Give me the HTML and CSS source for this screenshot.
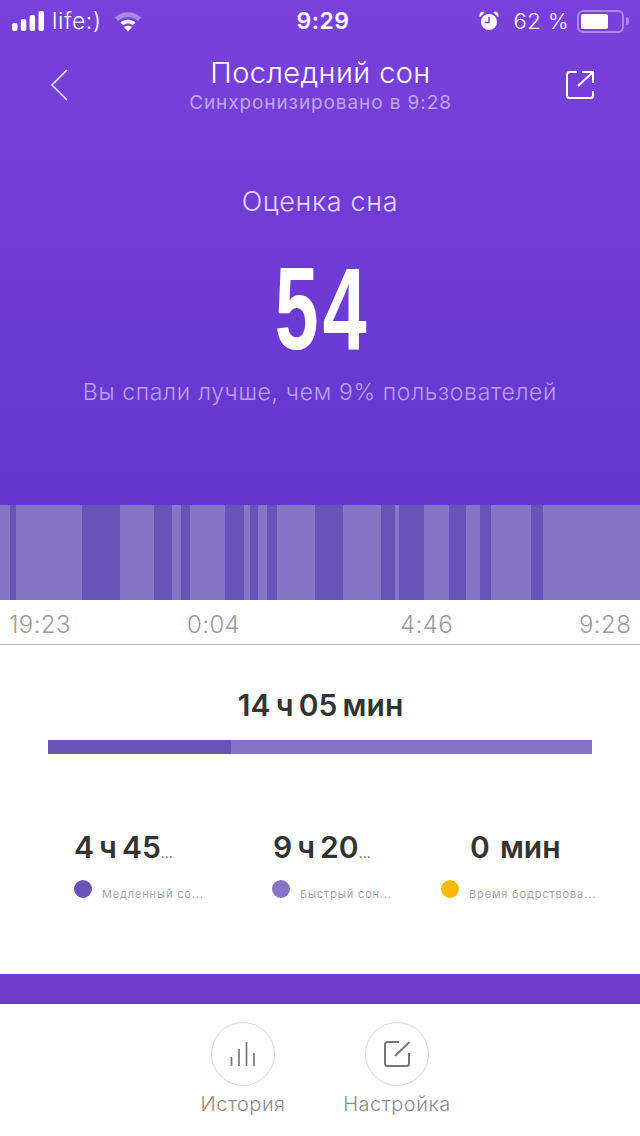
FILE: index.html
```html
<!DOCTYPE html>
<html lang="ru">
<head>
    <meta charset="UTF-8">
    <meta name="viewport" content="width=device-width, initial-scale=1.0">
    <title>Последний сон</title>
    <link rel="stylesheet" href="styles.css">
</head>
<body>
    <div class="page">
        <div class="hero">
            <div class="status-bar">
                <div class="status-left">
                    <svg class="signal" width="32" height="20" viewBox="0 0 32 20">
                        <rect x="0" y="12" width="5.500" height="8" rx="2" fill="#fff"/>
                        <rect x="8.800" y="8" width="5.500" height="12" rx="2" fill="#fff"/>
                        <rect x="17.600" y="4" width="5.500" height="16" rx="2" fill="#fff"/>
                        <rect x="26.500" y="0" width="5.500" height="20" rx="2" fill="#fff"/>
                    </svg>
                    <span class="carrier">life:)</span>
                    <svg class="wifi" width="28" height="21" viewBox="0 0 28 21">
                        <path d="M1 6.500C8.500 -0.500 19.500 -0.500 27 6.500L24 10C18 4.500 10 4.500 4 10Z" fill="#a98ae8"/>
                        <path d="M6.500 11.500C11 7.800 17 7.800 21.500 11.500L18.800 14.300C16 12 12 12 9.200 14.300Z" fill="#fff"/>
                        <path d="M10 16C12.500 14 15.500 14 18 16L14 20.500Z" fill="#fff"/>
                    </svg>
                </div>
                <div class="status-time">9:29</div>
                <div class="status-right">
                    <svg class="alarm" width="20" height="20" viewBox="0 0 20 20">
                        <circle cx="10" cy="11" r="8" fill="#fff"/>
                        <path d="M1 5.500L5 1.500L2.500 1Q0.500 2.500 1 5.500ZM19 5.500L15 1.500L17.500 1Q19.500 2.500 19 5.500Z" fill="#fff" stroke="#fff"/>
                        <path d="M10 6V11.500H5.500" fill="none" stroke="#7840d8" stroke-width="1.500"/>
                    </svg>
                    <span class="battery-text">62 %</span>
                    <div class="battery">
                        <div class="battery-level"></div>
                    </div>
                    <div class="battery-cap"></div>
                </div>
            </div>
            <div class="nav">
                <svg class="nav-icon" width="20" height="32" viewBox="0 0 20 32">
                    <path d="M18 1L3 16L18 31" fill="none" stroke="#fff" stroke-width="1.500"/>
                </svg>
                <div class="nav-title">
                    <h1>Последний сон</h1>
                    <p>Синхронизировано в 9:28</p>
                </div>
                <svg class="nav-icon" width="28" height="28" viewBox="0 0 28 28">
                    <path d="M11 1H3.500Q1 1 1 3.500V24.500Q1 27 3.500 27H24.500Q27 27 27 24.500V20" fill="none" stroke="#fff" stroke-width="2"/>
                    <path d="M12 15L26.500 1.500M16 1H27V12" fill="none" stroke="#fff" stroke-width="2"/>
                </svg>
            </div>
            <div class="score-label">Оценка сна</div>
            <div class="score">54</div>
            <div class="score-note">Вы спали лучше, чем 9% пользователей</div>
        </div>

        <div class="timeline">
            <span class="light" style="flex-basis: 10px"></span>
            <span class="dark" style="flex-basis: 6px"></span>
            <span class="light" style="flex-basis: 66px"></span>
            <span class="dark" style="flex-basis: 38px"></span>
            <span class="light" style="flex-basis: 34px"></span>
            <span class="dark" style="flex-basis: 18px"></span>
            <span class="light" style="flex-basis: 9px"></span>
            <span class="dark" style="flex-basis: 9px"></span>
            <span class="light" style="flex-basis: 35px"></span>
            <span class="dark" style="flex-basis: 19px"></span>
            <span class="light" style="flex-basis: 6px"></span>
            <span class="dark" style="flex-basis: 8px"></span>
            <span class="light" style="flex-basis: 9px"></span>
            <span class="dark" style="flex-basis: 10px"></span>
            <span class="light" style="flex-basis: 38px"></span>
            <span class="dark" style="flex-basis: 28px"></span>
            <span class="light" style="flex-basis: 38px"></span>
            <span class="dark" style="flex-basis: 14px"></span>
            <span class="light" style="flex-basis: 4px"></span>
            <span class="dark" style="flex-basis: 25px"></span>
            <span class="light" style="flex-basis: 25px"></span>
            <span class="dark" style="flex-basis: 17px"></span>
            <span class="light" style="flex-basis: 14px"></span>
            <span class="dark" style="flex-basis: 11px"></span>
            <span class="light" style="flex-basis: 40px"></span>
            <span class="dark" style="flex-basis: 12px"></span>
            <span class="light" style="flex-basis: 97px"></span>
        </div>
        <div class="axis">
            <span>19:23</span>
            <span>0:04</span>
            <span>4:46</span>
            <span>9:28</span>
        </div>

        <div class="summary">
            <div class="total">14 ч 05 мин</div>
            <div class="total-bar">
                <div class="total-deep" style="width: 183px"></div>
            </div>
            <div class="stats">
                <div class="stat stat-deep">
                    <div class="stat-value">4 ч 45<small>...</small></div>
                    <div class="stat-name"><i class="dot"></i><span>Медленный со...</span></div>
                </div>
                <div class="stat stat-light">
                    <div class="stat-value">9 ч 20<small>...</small></div>
                    <div class="stat-name"><i class="dot"></i><span>Быстрый сон...</span></div>
                </div>
                <div class="stat stat-awake">
                    <div class="stat-value">0&nbsp; мин</div>
                    <div class="stat-name"><i class="dot"></i><span>Время бодрствова...</span></div>
                </div>
            </div>
        </div>

        <div class="band"></div>

        <div class="actions">
            <div class="action">
                <div class="action-circle">
                    <svg width="26" height="26" viewBox="0 0 26 26">
                        <path d="M1.500 16V25M9 8V25M16.500 1V25M24 12V25" fill="none" stroke="#777" stroke-width="1.700"/>
                    </svg>
                </div>
                <span>История</span>
            </div>
            <div class="action">
                <div class="action-circle">
                    <svg width="28" height="28" viewBox="0 0 28 28">
                        <path d="M16 2H4.500Q2 2 2 4.500V23.500Q2 26 4.500 26H23.500Q26 26 26 23.500V13" fill="none" stroke="#777" stroke-width="2"/>
                        <path d="M12 16L26.500 2" fill="none" stroke="#777" stroke-width="2"/>
                    </svg>
                </div>
                <span>Настройка</span>
            </div>
        </div>
    </div>
</body>
</html>
```
FILE: styles.css
```css
* {
    box-sizing: border-box;
}

body {
    margin: 0;
    font-family: Inter, "Noto Sans", sans-serif;
    background-color: #fff;
}

.page {
    width: 640px;
    height: 1136px;
    display: flex;
    flex-direction: column;
    overflow: hidden;
}

.hero {
    height: 505px;
    background: linear-gradient(180deg, #7a41da 0%, #6436d0 100%);
    color: #fff;
    text-align: center;
}

.status-bar {
    height: 42px;
    padding: 0 11px 0 12px;
    display: flex;
    align-items: center;
    justify-content: space-between;
    position: relative;
}

.status-left,
.status-right {
    display: flex;
    align-items: center;
}

.carrier {
    font-size: 23px;
    letter-spacing: 0.6px;
    margin-left: 8px;
    font-weight: 300;
}

.wifi {
    margin-left: 12px;
}

.status-time {
    padding-left: 6px;
    font-size: 23px;
    letter-spacing: 0.5px;
    font-weight: 600;
    position: absolute;
    left: 0;
    right: 0;
    text-align: center;
}

.battery-text {
    font-size: 22px;
    letter-spacing: 0.5px;
    font-weight: 300;
    margin-left: 14px;
}

.battery {
    width: 47px;
    height: 23px;
    margin-left: 8px;
    padding: 2px;
    border: 2px solid #a98ae8;
    border-radius: 6px;
}

.battery-level {
    width: 27px;
    height: 100%;
    background-color: #fff;
    border-radius: 2px;
}

.battery-cap {
    width: 3px;
    height: 8px;
    margin-left: 2px;
    background-color: #a98ae8;
    border-radius: 0 3px 3px 0;
}

.nav {
    height: 86px;
    padding: 0 46px 0 49px;
    display: flex;
    align-items: center;
    justify-content: space-between;
}

.nav-title {
    margin-left: 6px;
    padding-bottom: 2px;
}

.nav-title h1 {
    margin: 0;
    font-size: 29px;
    letter-spacing: 0.4px;
    font-weight: 300;
    line-height: 38px;
}

.nav-title p {
    margin: -1px 0 0;
    font-size: 19px;
    letter-spacing: 0.9px;
    line-height: 24px;
    color: #bda6ee;
}

.score-label {
    margin-top: 56px;
    font-size: 27px;
    letter-spacing: 0.7px;
    line-height: 36px;
    font-weight: 300;
    color: #e2d8f8;
}

.score {
    margin-top: 31px;
    padding-left: 8px;
    font-family: "Liberation Sans", sans-serif;
    font-size: 116px;
    font-weight: 700;
    letter-spacing: 6px;
    line-height: 116px;
    transform: scaleX(0.68);
}

.score-note {
    margin-top: 10px;
    font-size: 23px;
    letter-spacing: 0.65px;
    line-height: 30px;
    font-weight: 300;
    color: #b9a3ec;
}

.timeline {
    height: 95px;
    display: flex;
}

.timeline span {
    flex-grow: 0;
    flex-shrink: 0;
}

.light {
    background-color: #8575c7;
}

.dark {
    background-color: #6754b8;
}

.axis {
    height: 45px;
    padding: 5px 0 0 9px;
    display: grid;
    grid-template-columns: 178px 213px 179px 1fr;
    align-items: center;
    font-size: 24px;
    letter-spacing: 0.4px;
    font-weight: 300;
    color: #9b9b9b;
    border-bottom: 1px solid #b5b5b5;
}

.summary {
    height: 329px;
    padding: 0 48px;
}

.total {
    margin-top: 42px;
    padding-left: 1px;
    font-size: 30px;
    word-spacing: -2.300px;
    line-height: 36px;
    font-weight: 600;
    color: #333;
    text-align: center;
}

.total-bar {
    margin-top: 17px;
    height: 14px;
    background-color: #8575c7;
}

.total-deep {
    height: 100%;
    background-color: #6754b8;
}

.stats {
    margin-top: 73px;
    display: flex;
}

.stat-deep {
    width: 198px;
    margin-left: 26px;
    flex: none;
}

.stat-light {
    width: 169px;
    flex: none;
}

.stat-value {
    font-size: 30px;
    word-spacing: -2.500px;
    line-height: 40px;
    font-weight: 600;
    color: #333;
    white-space: nowrap;
}

.stat-light .stat-value {
    margin-left: 1px;
}

.stat-awake .stat-value {
    margin-left: 29px;
}

.stat-value small {
    font-size: 14px;
    line-height: 1;
    font-weight: 400;
    color: #666;
}

.stat-name {
    margin-top: 13px;
    display: flex;
    font-size: 11px;
    letter-spacing: 0.85px;
    color: #a5a5a5;
    white-space: nowrap;
}

.stat-name span {
    margin: 7px 0 0 10px;
}

.dot {
    flex: none;
    width: 18px;
    height: 18px;
    border-radius: 50%;
}

.stat-deep .dot {
    background-color: #6754b8;
}

.stat-light .dot {
    background-color: #8575c7;
}

.stat-awake .dot {
    background-color: #ffb900;
}

.band {
    height: 30px;
    background-color: #6f3dc8;
}

.actions {
    flex: 1;
    padding-top: 18px;
    display: flex;
    justify-content: center;
    gap: 50px;
}

.action {
    width: 104px;
    display: flex;
    flex-direction: column;
    align-items: center;
    font-size: 20px;
    letter-spacing: 0.5px;
    font-weight: 300;
    color: #8c8c8c;
    white-space: nowrap;
}

.action-circle {
    width: 64px;
    height: 64px;
    margin-bottom: 6px;
    display: flex;
    align-items: center;
    justify-content: center;
    border: 1px solid #d8d8d8;
    border-radius: 50%;
}
```
